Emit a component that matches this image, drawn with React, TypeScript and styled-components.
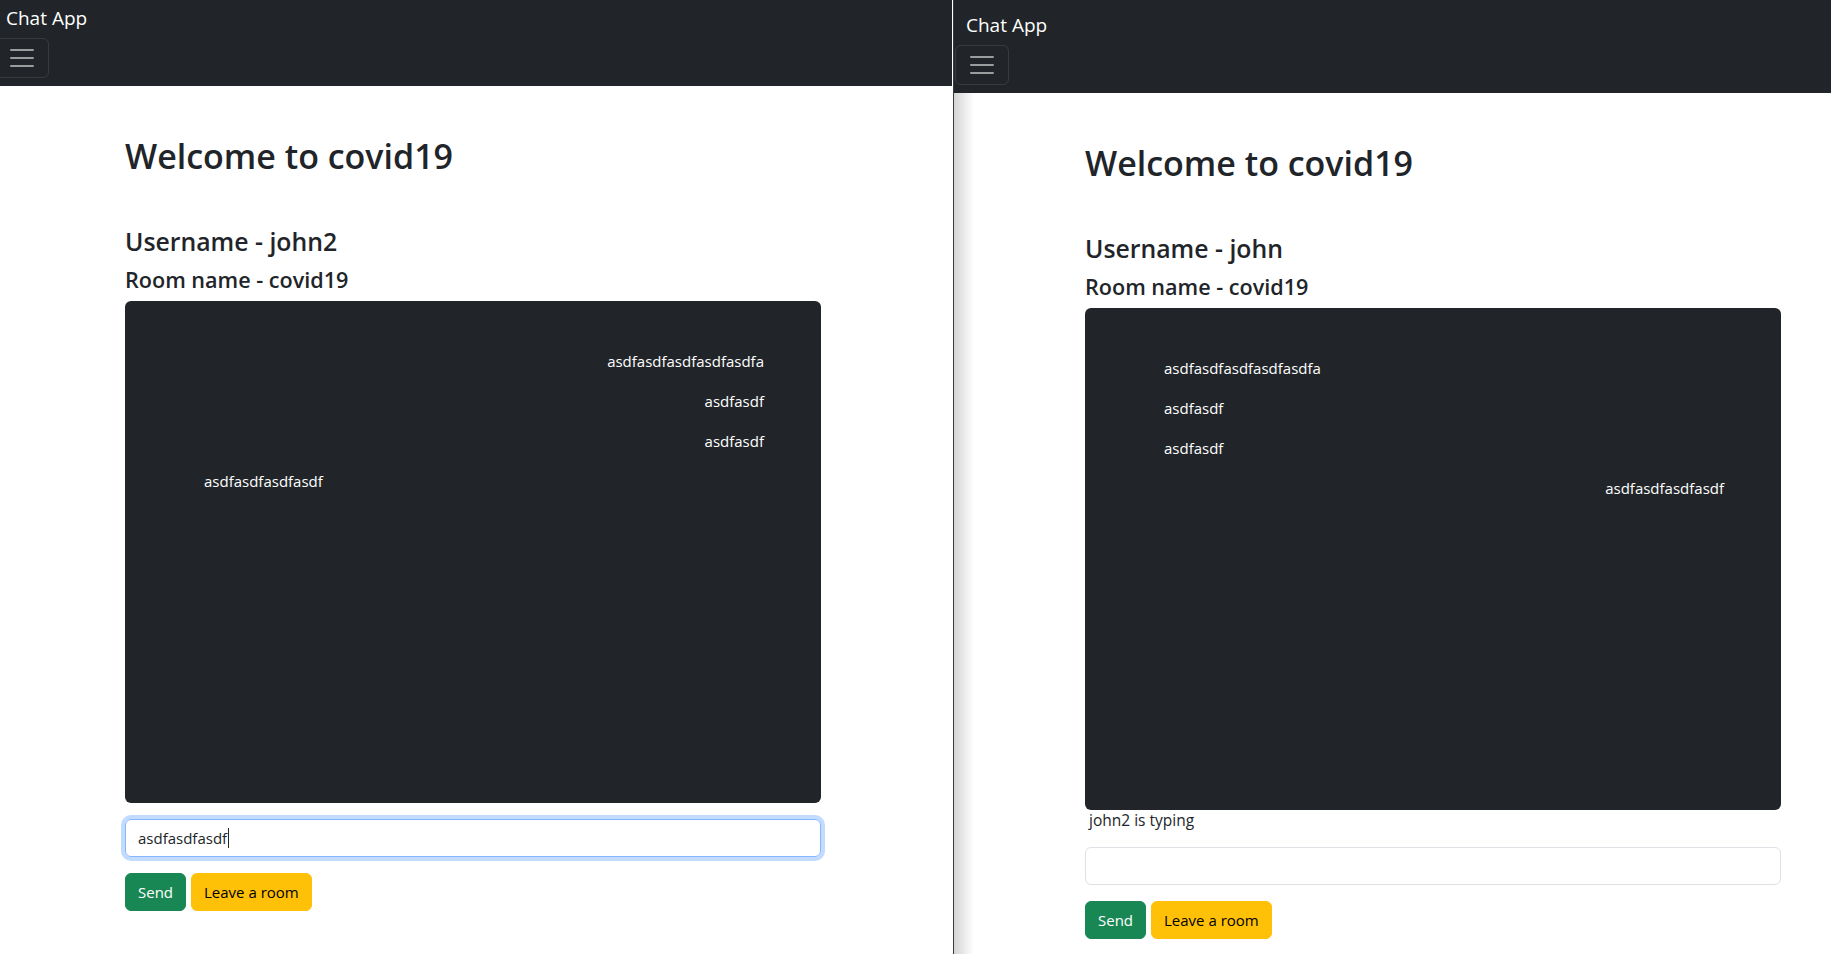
import React from "react";
import styled, { createGlobalStyle } from "styled-components";

const GlobalStyle = createGlobalStyle`
  html, body { margin: 0; padding: 0; background: #fff; }
  body {
    font-family: "Open Sans", "Noto Sans", "Liberation Sans", sans-serif;
    color: #212529;
  }
  *, *::before, *::after { box-sizing: border-box; }
`;

const Desktop = styled.div`
  display: flex;
  width: 1831px;
  height: 954px;
  overflow: hidden;
  background: #fff;
`;

const Window = styled.section<{ $width?: number }>`
  flex: ${(p) => (p.$width ? `0 0 ${p.$width}px` : "1 1 auto")};
  min-width: 0;
  height: 100%;
  overflow: hidden;
`;

const Divider = styled.div`
  flex: 0 0 1px;
  background: #3a3a3a;
`;

const Page = styled.div<{ $shiftX: number; $shiftY: number }>`
  width: 958px;
  margin-left: ${(p) => p.$shiftX}px;
  margin-top: ${(p) => p.$shiftY}px;
`;

const Navbar = styled.nav`
  background: #212529;
  padding: 8px 0;
  display: flex;
  flex-direction: column;
  align-items: flex-start;
`;

const Brand = styled.a`
  color: #fff;
  font-size: 19px;
  line-height: 30px;
  padding: 2px 0 5px 12px;
  text-decoration: none;
`;

const Toggler = styled.button`
  margin-left: 1px;
  width: 54px;
  height: 40px;
  padding: 0;
  background: transparent;
  border: 1px solid rgba(255, 255, 255, 0.1);
  border-radius: 6px;
  display: flex;
  align-items: center;
  justify-content: center;
`;

const Main = styled.main<{ $shadow?: boolean }>`
  min-height: 880px;
  padding-top: 49px;
  background: ${(p) =>
    p.$shadow
      ? "linear-gradient(to right, rgba(0,0,0,0.17), rgba(0,0,0,0) 20px), #fff"
      : "#fff"};
`;

const Container = styled.div`
  width: 720px;
  margin: 0 auto;
  padding: 0 12px;
`;

const Title = styled.h1`
  margin: 0 0 49px;
  font-size: 34px;
  line-height: 42px;
  font-weight: 600;
`;

const UserName = styled.h3`
  margin: 0 0 10px;
  font-size: 24.8px;
  line-height: 30.6px;
  font-weight: 600;
`;

const RoomName = styled.h4`
  margin: 0 0 8px;
  font-size: 21.6px;
  line-height: 26.8px;
  font-weight: 600;
`;

const ChatBox = styled.div`
  height: 502px;
  background: #212529;
  border-radius: 6px;
  padding: 40px 57px 0 79px;
  display: flex;
  flex-direction: column;
  color: #fff;
`;

const Message = styled.div<{ $own: boolean }>`
  align-self: ${(p) => (p.$own ? "flex-end" : "flex-start")};
  padding: 8px 0;
  font-size: 15px;
  line-height: 24px;
`;

const Typing = styled.div`
  padding-left: 4px;
  font-size: 15.5px;
  line-height: 21px;
  color: #212529;
`;

const Field = styled.div<{ $focused?: boolean }>`
  margin-top: 16px;
  height: 38px;
  padding: 6px 12px;
  border: 1px solid ${(p) => (p.$focused ? "#86b7fe" : "#dee2e6")};
  border-radius: 6px;
  box-shadow: ${(p) => (p.$focused ? "0 0 0 4px rgba(13,110,253,0.25)" : "none")};
  font-size: 15px;
  line-height: 24px;
  color: #212529;
  display: flex;
  align-items: center;
`;

const Caret = styled.span`
  display: inline-block;
  width: 1px;
  height: 20px;
  margin-left: 1px;
  background: #212529;
`;

const Actions = styled.div`
  margin-top: 16px;
  display: flex;
  gap: 5px;
`;

const Button = styled.button<{ $variant: "success" | "warning" }>`
  height: 38px;
  padding: 6px 12px;
  font-family: inherit;
  font-size: 15px;
  line-height: 24px;
  border-radius: 6px;
  border: 1px solid ${(p) => (p.$variant === "success" ? "#198754" : "#ffc107")};
  background: ${(p) => (p.$variant === "success" ? "#198754" : "#ffc107")};
  color: ${(p) => (p.$variant === "success" ? "#fff" : "#000")};
`;

const TogglerIcon = () => (
  <svg width="30" height="30" viewBox="0 0 30 30" aria-hidden="true">
    <path
      d="M4 7h22M4 15h22M4 23h22"
      stroke="rgba(255,255,255,0.55)"
      strokeWidth="2"
      strokeLinecap="round"
      strokeMiterlimit="10"
    />
  </svg>
);

type Msg = { text: string; author: string };

const messages: Msg[] = [
  { text: "asdfasdfasdfasdfasdfa", author: "john2" },
  { text: "asdfasdf", author: "john2" },
  { text: "asdfasdf", author: "john2" },
  { text: "asdfasdfasdfasdf", author: "john" },
];

type ChatProps = {
  username: string;
  typing?: string;
  draft: string;
  focused?: boolean;
  shiftX: number;
  shiftY: number;
  shadow?: boolean;
};

const ChatWindow = ({ username, typing, draft, focused, shiftX, shiftY, shadow }: ChatProps) => (
  <Page $shiftX={shiftX} $shiftY={shiftY}>
    <Navbar>
      <Brand href="#">Chat App</Brand>
      <Toggler aria-label="Toggle navigation">
        <TogglerIcon />
      </Toggler>
    </Navbar>
    <Main $shadow={shadow}>
      <Container>
        <Title>Welcome to covid19</Title>
        <UserName>Username - {username}</UserName>
        <RoomName>Room name - covid19</RoomName>
        <ChatBox>
          {messages.map((m, i) => (
            <Message key={i} $own={m.author === username}>
              {m.text}
            </Message>
          ))}
        </ChatBox>
        {typing && <Typing>{typing}</Typing>}
        <Field $focused={focused} role="textbox">
          {draft}
          {focused && <Caret />}
        </Field>
        <Actions>
          <Button $variant="success">Send</Button>
          <Button $variant="warning">Leave a room</Button>
        </Actions>
      </Container>
    </Main>
  </Page>
);

export default function App() {
  return (
    <>
      <GlobalStyle />
      <Desktop>
        <Window $width={953}>
          <ChatWindow username="john2" draft="asdfasdfasdf" focused shiftX={-6} shiftY={-7} />
        </Window>
        <Divider />
        <Window>
          <ChatWindow username="john" typing="john2 is typing" draft="" shiftX={0} shiftY={0} shadow />
        </Window>
      </Desktop>
    </>
  );
}
